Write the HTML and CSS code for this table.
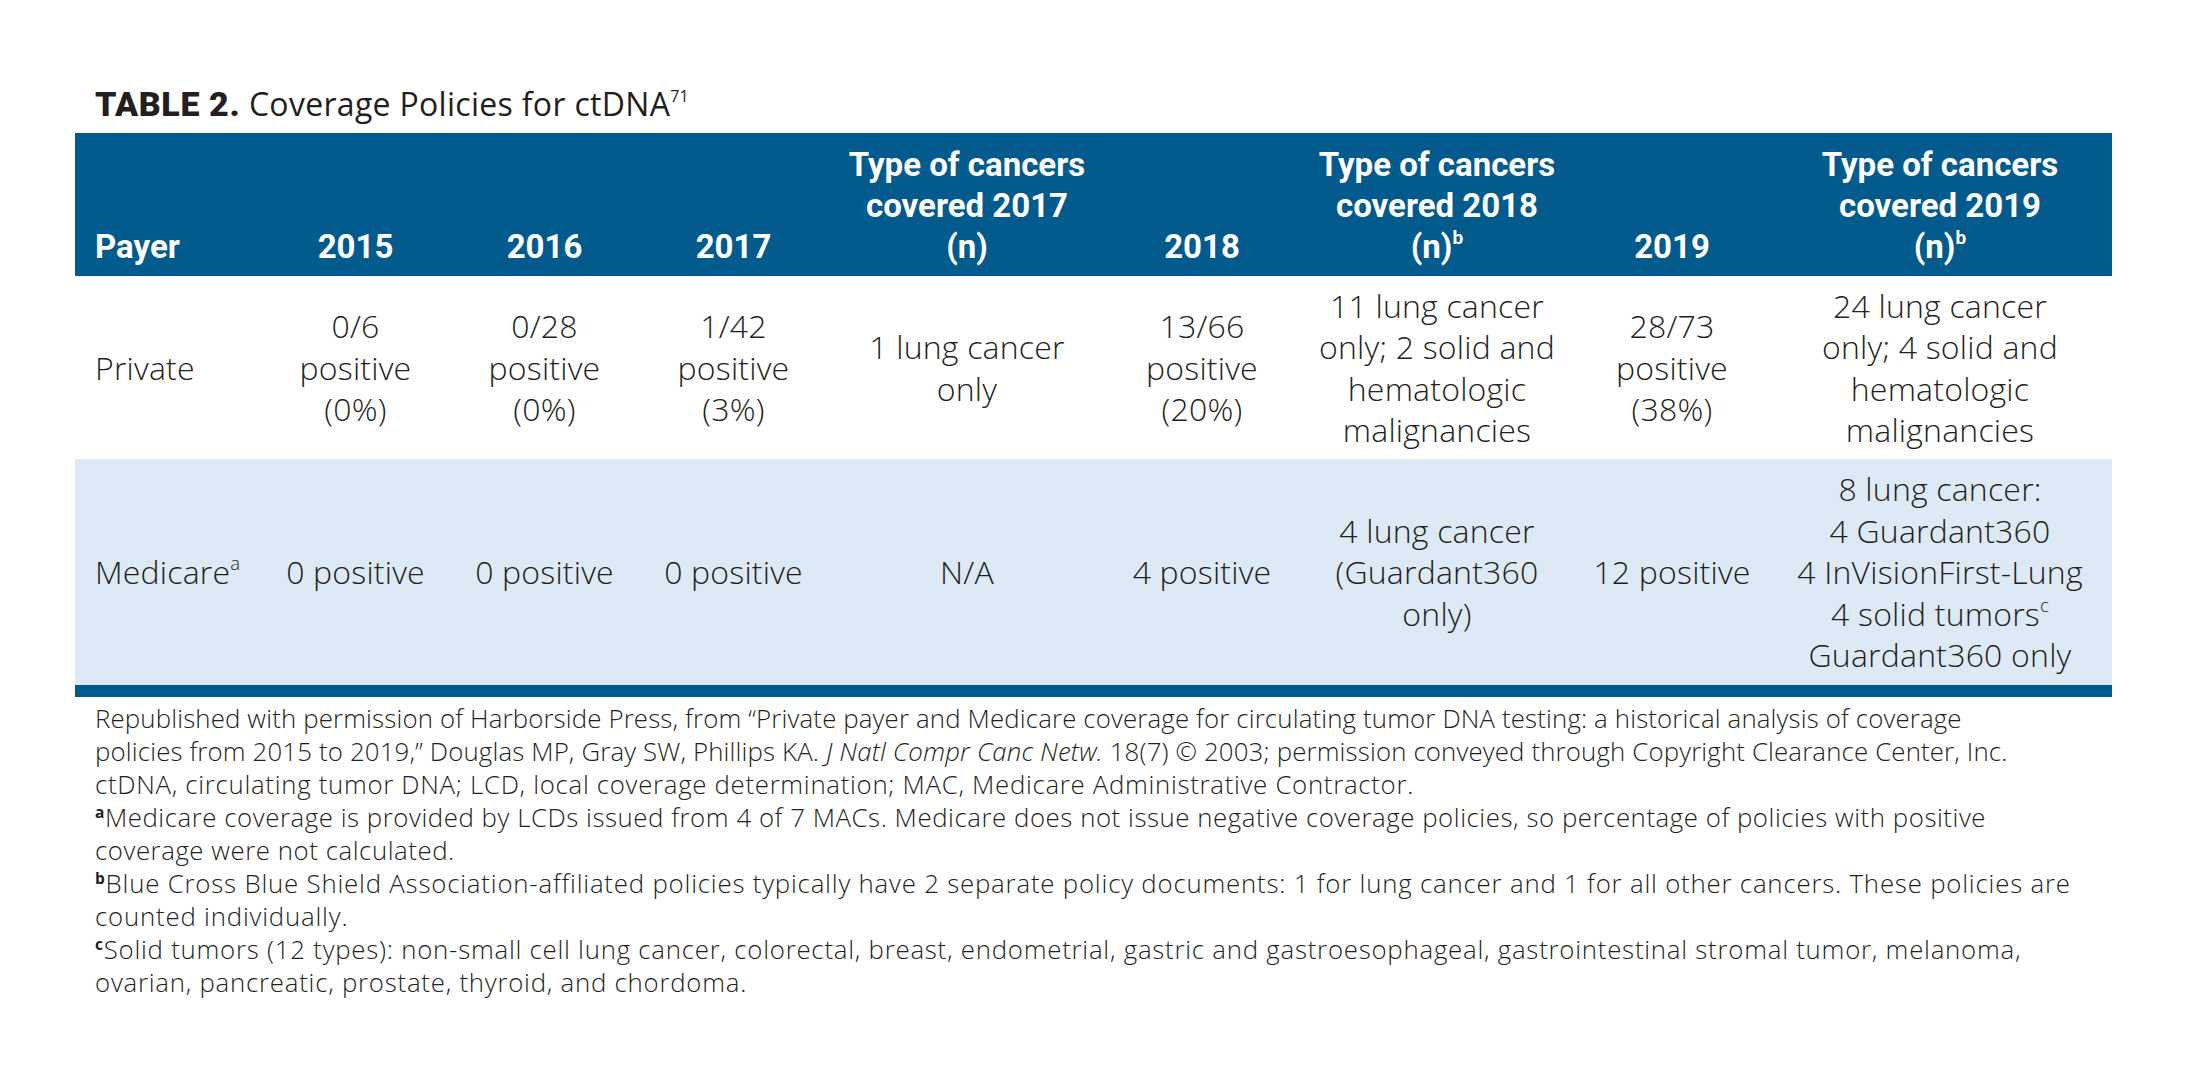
FILE: index.html
```html
<!DOCTYPE html>
<html lang="en">
<head>
<meta charset="utf-8">
<title>Table 2. Coverage Policies for ctDNA</title>
<link rel="stylesheet" href="styles.css">
</head>
<body>
<main class="page">
  <h1 class="caption"><span class="caption-label">TABLE 2.</span> Coverage Policies for ctDNA<sup class="ref">71</sup></h1>
  <table class="coverage">
    <colgroup>
      <col class="c-payer">
      <col class="c-year">
      <col class="c-year">
      <col class="c-year">
      <col class="c-type">
      <col class="c-year2">
      <col class="c-type">
      <col class="c-year2">
      <col class="c-type-wide">
    </colgroup>
    <thead>
      <tr class="head-row">
        <th class="left">Payer</th>
        <th>2015</th>
        <th>2016</th>
        <th>2017</th>
        <th>Type of cancers<br>covered 2017<br>(n)</th>
        <th>2018</th>
        <th>Type of cancers<br>covered 2018<br>(n)<sup class="mark">b</sup></th>
        <th>2019</th>
        <th>Type of cancers<br>covered 2019<br>(n)<sup class="mark">b</sup></th>
      </tr>
    </thead>
    <tbody>
      <tr class="row-private">
        <td class="left">Private</td>
        <td>0/6<br>positive<br>(0%)</td>
        <td>0/28<br>positive<br>(0%)</td>
        <td>1/42<br>positive<br>(3%)</td>
        <td>1 lung cancer<br>only</td>
        <td>13/66<br>positive<br>(20%)</td>
        <td>11 lung cancer<br>only; 2 solid and<br>hematologic<br>malignancies</td>
        <td>28/73<br>positive<br>(38%)</td>
        <td>24 lung cancer<br>only; 4 solid and<br>hematologic<br>malignancies</td>
      </tr>
      <tr class="row-medicare">
        <td class="left">Medicare<sup class="mark">a</sup></td>
        <td>0 positive</td>
        <td>0 positive</td>
        <td>0 positive</td>
        <td>N/A</td>
        <td>4 positive</td>
        <td>4 lung cancer<br>(Guardant360<br>only)</td>
        <td>12 positive</td>
        <td>8 lung cancer:<br>4 Guardant360<br>4 InVisionFirst-Lung<br>4 solid tumors<sup class="mark">c</sup><br>Guardant360 only</td>
      </tr>
    </tbody>
  </table>
  <div class="notes">
    <p class="source">Republished with permission of Harborside Press, from “Private payer and Medicare coverage for circulating tumor DNA testing: a historical analysis of coverage<br>policies from 2015 to 2019,” Douglas MP, Gray SW, Phillips KA. <em>J Natl Compr Canc Netw.</em> 18(7) © 2003; permission conveyed through Copyright Clearance Center, Inc.</p>
    <p>ctDNA, circulating tumor DNA; LCD, local coverage determination; MAC, Medicare Administrative Contractor.</p>
    <p class="note-a"><sup class="fn">a</sup>Medicare coverage is provided by LCDs issued from 4 of 7 MACs. Medicare does not issue negative coverage policies, so percentage of policies with positive<br>coverage were not calculated.</p>
    <p class="note-b"><sup class="fn">b</sup>Blue Cross Blue Shield Association-affiliated policies typically have 2 separate policy documents: 1 for lung cancer and 1 for all other cancers. These policies are<br>counted individually.</p>
    <p class="note-c"><sup class="fn">c</sup>Solid tumors (12 types): non-small cell lung cancer, colorectal, breast, endometrial, gastric and gastroesophageal, gastrointestinal stromal tumor, melanoma,<br>ovarian, pancreatic, prostate, thyroid, and chordoma.</p>
  </div>
</main>
</body>
</html>
```

FILE: styles.css
```css
html, body {
  margin: 0;
  padding: 0;
  background: #ffffff;
}

body {
  font-family: "Open Sans", "DejaVu Sans", sans-serif;
  color: #231f20;
}

.page {
  width: 2037px;
  padding: 84px 0 40px 75px;
}

.caption {
  margin: 0 0 9px 20px;
  font-family: "Open Sans", "DejaVu Sans", sans-serif;
  font-weight: 400;
  font-size: 32px;
  letter-spacing: 0.3px;
  line-height: 40px;
  color: #231f20;
}

.caption-label {
  font-family: Roboto, "DejaVu Sans", sans-serif;
  font-weight: 900;
  font-size: 34px;
  letter-spacing: 0.6px;
}

.ref {
  font-size: 0.5em;
  line-height: 0;
  vertical-align: 0.85em;
}

.coverage {
  width: 2037px;
  table-layout: fixed;
  border-collapse: separate;
  border-spacing: 0;
  border-bottom: 12px solid #035a8c;
}

.c-payer { width: 186px; }
.c-year { width: 189px; }
.c-year2 { width: 192px; }
.c-type { width: 278px; }
.c-type-wide { width: 344px; }

.head-row {
  height: 143px;
}

.coverage th {
  background: #035a8c;
  color: #ffffff;
  font-family: Roboto, "DejaVu Sans", sans-serif;
  font-weight: 700;
  font-size: 33px;
  line-height: 41px;
  text-align: center;
  vertical-align: bottom;
  padding: 0 4px 9px;
  white-space: nowrap;
}

.coverage td {
  font-size: 32px;
  font-weight: 300;
  letter-spacing: 0.2px;
  line-height: 41.5px;
  text-align: center;
  vertical-align: middle;
  padding: 0 4px;
  white-space: nowrap;
  color: #231f20;
}

.coverage .left {
  text-align: left;
  padding-left: 20px;
}

.row-private {
  height: 183px;
  background: #ffffff;
}

.row-medicare {
  height: 226px;
  background: #dde9f5;
}

.mark {
  font-size: 0.58em;
  line-height: 0;
  vertical-align: 0.75em;
}

.notes {
  margin: 5px 0 0 20px;
  font-size: 25.8px;
  font-weight: 300;
  letter-spacing: 0.7px;
  line-height: 33px;
  white-space: nowrap;
}

.notes p {
  margin: 0;
}

.notes .source {
  letter-spacing: 0.15px;
}

.notes .note-a {
  letter-spacing: 0.55px;
}

.notes .note-b {
  letter-spacing: 0.8px;
}

.notes .note-c {
  letter-spacing: 0.76px;
}

.fn {
  font-size: 0.6em;
  font-weight: 700;
  line-height: 0;
  vertical-align: 0.6em;
}
```
